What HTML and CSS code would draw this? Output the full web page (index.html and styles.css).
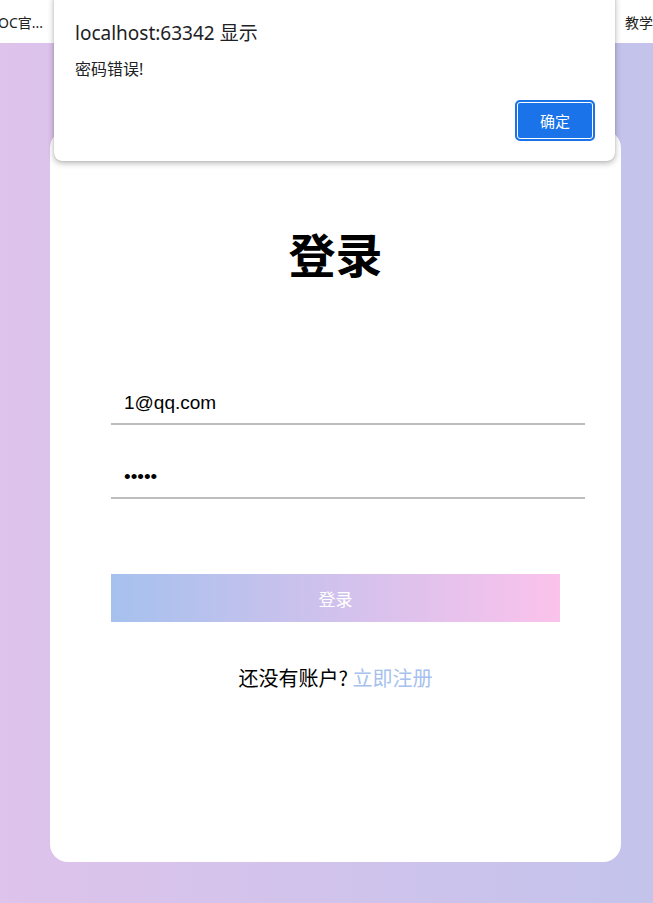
FILE: index.html
```html
<!DOCTYPE html>
<html lang="zh-CN">
<head>
<meta charset="utf-8">
<title>登录</title>
<link rel="stylesheet" href="styles.css">
</head>
<body>
<div class="bookmarks">
  <span class="bm bm-left">OC官...</span>
  <span class="bm bm-right">教学</span>
</div>
<main class="stage">
  <section class="card">
    <h1 class="title">登录</h1>
    <form class="form">
      <div class="field"><input class="input" type="text" value="1@qq.com"></div>
      <div class="field"><input class="input" type="password" value="12345"></div>
      <button type="button" class="submit">登录</button>
    </form>
    <p class="hint">还没有账户? <a class="link" href="#">立即注册</a></p>
  </section>
</main>
<div class="dialog">
  <div class="dialog-title">localhost:63342 显示</div>
  <div class="dialog-msg">密码错误!</div>
  <div class="dialog-actions"><button type="button" class="dialog-btn">确定</button></div>
</div>
</body>
</html>
```
FILE: styles.css
```css
* { box-sizing: border-box; }
html, body { margin: 0; padding: 0; }
body {
  width: 653px;
  height: 903px;
  overflow: hidden;
  font-family: "Liberation Sans", Arial, "Noto Sans CJK SC", sans-serif;
  position: relative;
}
.bookmarks {
  height: 43px;
  background: #fff;
  display: flex;
  justify-content: space-between;
  align-items: center;
  font-family: "Noto Sans", "Noto Sans CJK SC", sans-serif;
  font-size: 14px;
  color: #222;
}
.bm-left { margin-left: -2px; }
.bm-right { width: 28px; overflow: hidden; white-space: nowrap; }
.stage {
  height: 860px;
  padding: 87px 32px 41px 50px;
  background: linear-gradient(to right, #dec3eb, #c3c3ec);
}
.card {
  height: 732px;
  background: #fff;
  border-radius: 18px;
  padding: 97px 36px 0 61px;
  display: flex;
  flex-direction: column;
}
.title {
  margin: 0 0 0 -25px;
  text-align: center;
  font-family: "Noto Sans CJK SC", sans-serif;
  font-size: 47px;
  line-height: 52px;
  font-weight: 700;
  color: #000;
}
.form {
  display: flex;
  flex-direction: column;
  margin-top: 94px;
}
.field { height: 74px; display: flex; align-items: flex-end; }
.field:first-child { height: 52px; }
.input {
  width: 100%;
  height: 52px;
  border: 0;
  border-bottom: 2px solid #bdbdbd;
  outline: none;
  padding: 9px 0 0 13px;
  font-family: "Liberation Sans", Arial, sans-serif;
  font-size: 19px;
  color: #000;
  background: transparent;
}
.submit {
  margin-top: 75px;
  width: 449px;
  height: 48px;
  border: 0;
  background: linear-gradient(to right, #a6c1ee, #fbc2eb);
  color: #fff;
  font-family: "Noto Sans CJK SC", sans-serif;
  font-size: 17px;
  padding: 0;
}
.hint {
  margin: 42px 0 0 -25px;
  text-align: center;
  font-family: "Noto Sans CJK SC", sans-serif;
  font-size: 20px;
  line-height: 28px;
  color: #000;
}
.link { color: #a6c1ee; text-decoration: none; }
.dialog {
  position: absolute;
  left: 54px;
  top: -8px;
  width: 561px;
  height: 169px;
  background: #fff;
  border-radius: 8px;
  box-shadow: 0 2px 6px rgba(0,0,0,0.3), 0 0 1px rgba(0,0,0,0.3);
  padding: 27px 20px 0 21px;
  font-family: "Noto Sans", "Noto Sans CJK SC", sans-serif;
  color: #202124;
}
.dialog-title { font-size: 19px; line-height: 28px; }
.dialog-msg { font-size: 16px; line-height: 22px; margin-top: 11px; }
.dialog-actions { display: flex; justify-content: flex-end; margin-top: 20px; }
.dialog-btn {
  width: 80px;
  height: 41px;
  border-radius: 5px;
  background: #1a73e8;
  color: #fff;
  border: 2px solid #1a73e8;
  box-shadow: inset 0 0 0 1px #fff;
  font-family: "Noto Sans CJK SC", sans-serif;
  font-size: 15px;
  padding: 0;
}
```
